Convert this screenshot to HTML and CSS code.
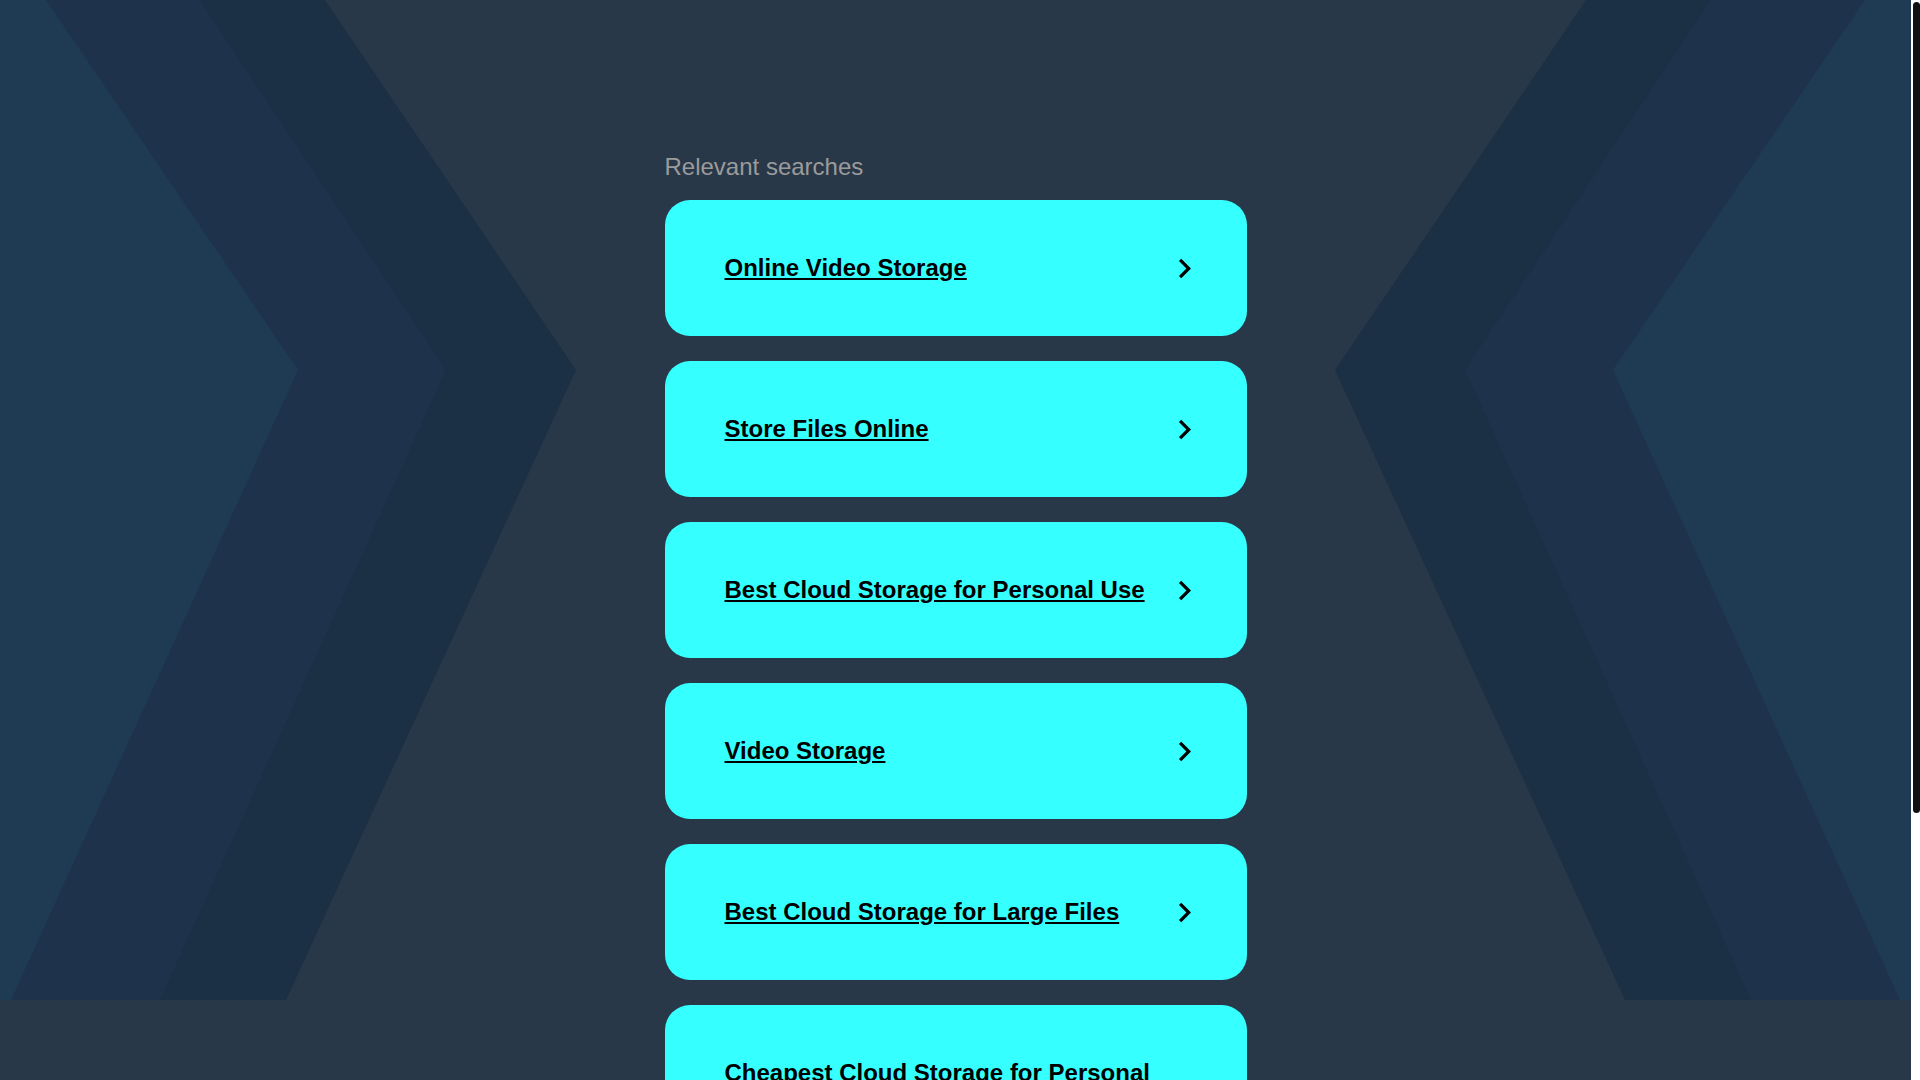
FILE: index.html
```html
<!DOCTYPE html>
<html lang="en">
<head>
<meta charset="utf-8">
<title>Relevant searches</title>
<link rel="stylesheet" href="styles.css">
</head>
<body>
<div class="page">
  <svg class="backdrop" viewBox="0 0 1911 1000" preserveAspectRatio="none" aria-hidden="true">
    <polygon points="-10,0 325,0 576,370 286,1000 -10,1000" fill="#1b2f45"/>
    <polygon points="-10,0 200,0 446,370 160,1000 -10,1000" fill="#1e334b"/>
    <polygon points="-10,0 46,0 298,370 11,1000 -10,1000" fill="#1f3b54"/>
    <polygon points="1921,0 1586,0 1335,370 1625,1000 1921,1000" fill="#1b2f45"/>
    <polygon points="1921,0 1711,0 1465,370 1751,1000 1921,1000" fill="#1e334b"/>
    <polygon points="1921,0 1865,0 1613,370 1900,1000 1921,1000" fill="#1f3b54"/>
  </svg>
  <main class="content">
    <h2 class="heading">Relevant searches</h2>
    <div class="cards">
      <a class="card" href="#"><span class="card-text"><span class="label">Online Video Storage</span></span><svg class="chev" viewBox="0 0 24 24"><path d="M10 6L8.59 7.41 13.17 12l-4.58 4.59L10 18l6-6z"/></svg></a>
      <a class="card" href="#"><span class="card-text"><span class="label">Store Files Online</span></span><svg class="chev" viewBox="0 0 24 24"><path d="M10 6L8.59 7.41 13.17 12l-4.58 4.59L10 18l6-6z"/></svg></a>
      <a class="card" href="#"><span class="card-text"><span class="label">Best Cloud Storage for Personal Use</span></span><svg class="chev" viewBox="0 0 24 24"><path d="M10 6L8.59 7.41 13.17 12l-4.58 4.59L10 18l6-6z"/></svg></a>
      <a class="card" href="#"><span class="card-text"><span class="label">Video Storage</span></span><svg class="chev" viewBox="0 0 24 24"><path d="M10 6L8.59 7.41 13.17 12l-4.58 4.59L10 18l6-6z"/></svg></a>
      <a class="card" href="#"><span class="card-text"><span class="label">Best Cloud Storage for Large Files</span></span><svg class="chev" viewBox="0 0 24 24"><path d="M10 6L8.59 7.41 13.17 12l-4.58 4.59L10 18l6-6z"/></svg></a>
      <a class="card" href="#"><span class="card-text"><span class="label">Cheapest Cloud Storage for Personal Use</span></span><svg class="chev" viewBox="0 0 24 24"><path d="M10 6L8.59 7.41 13.17 12l-4.58 4.59L10 18l6-6z"/></svg></a>
    </div>
  </main>
</div>
<div class="scrollbar" aria-hidden="true"><div class="scroll-thumb"></div></div>
</body>
</html>
```
FILE: styles.css
```css
html {
  background: #283848;
}
body {
  margin: 0;
  padding-right: 9px;
  font-family: "Liberation Sans", Arial, sans-serif;
  background: #283848;
}
.page {
  position: relative;
  min-height: 1435px;
}
.backdrop {
  position: absolute;
  top: 0;
  left: 0;
  width: 100%;
  height: 1000px;
  display: block;
  z-index: 0;
}
.content {
  position: relative;
  z-index: 1;
  width: 582px;
  margin: 0 auto;
  padding-top: 153px;
  padding-bottom: 250px;
}
.heading {
  margin: 0 0 19px;
  font-size: 24px;
  font-weight: normal;
  line-height: normal;
  color: #9b9b9b;
}
.cards {
  display: flex;
  flex-direction: column;
  gap: 25px;
}
.card {
  display: flex;
  align-items: center;
  background: #36ffff;
  border-radius: 25px;
  padding: 48px 42px 48px 60px;
  color: #000000;
  text-decoration: none;
}
.card-text {
  flex: 1;
  font-size: 24px;
  font-weight: bold;
  line-height: 40px;
}
.label {
  text-decoration: underline;
}
.chev {
  flex-shrink: 0;
  width: 39px;
  height: 39px;
  margin-right: 1px;
  fill: #000000;
}
.scrollbar {
  position: fixed;
  top: 0;
  right: 0;
  width: 9px;
  height: 100vh;
  background: #ffffff;
  z-index: 5;
}
.scroll-thumb {
  margin: 2px 0 0 2px;
  width: 7px;
  height: 811px;
  background: #111111;
  border-radius: 4px;
}
```
